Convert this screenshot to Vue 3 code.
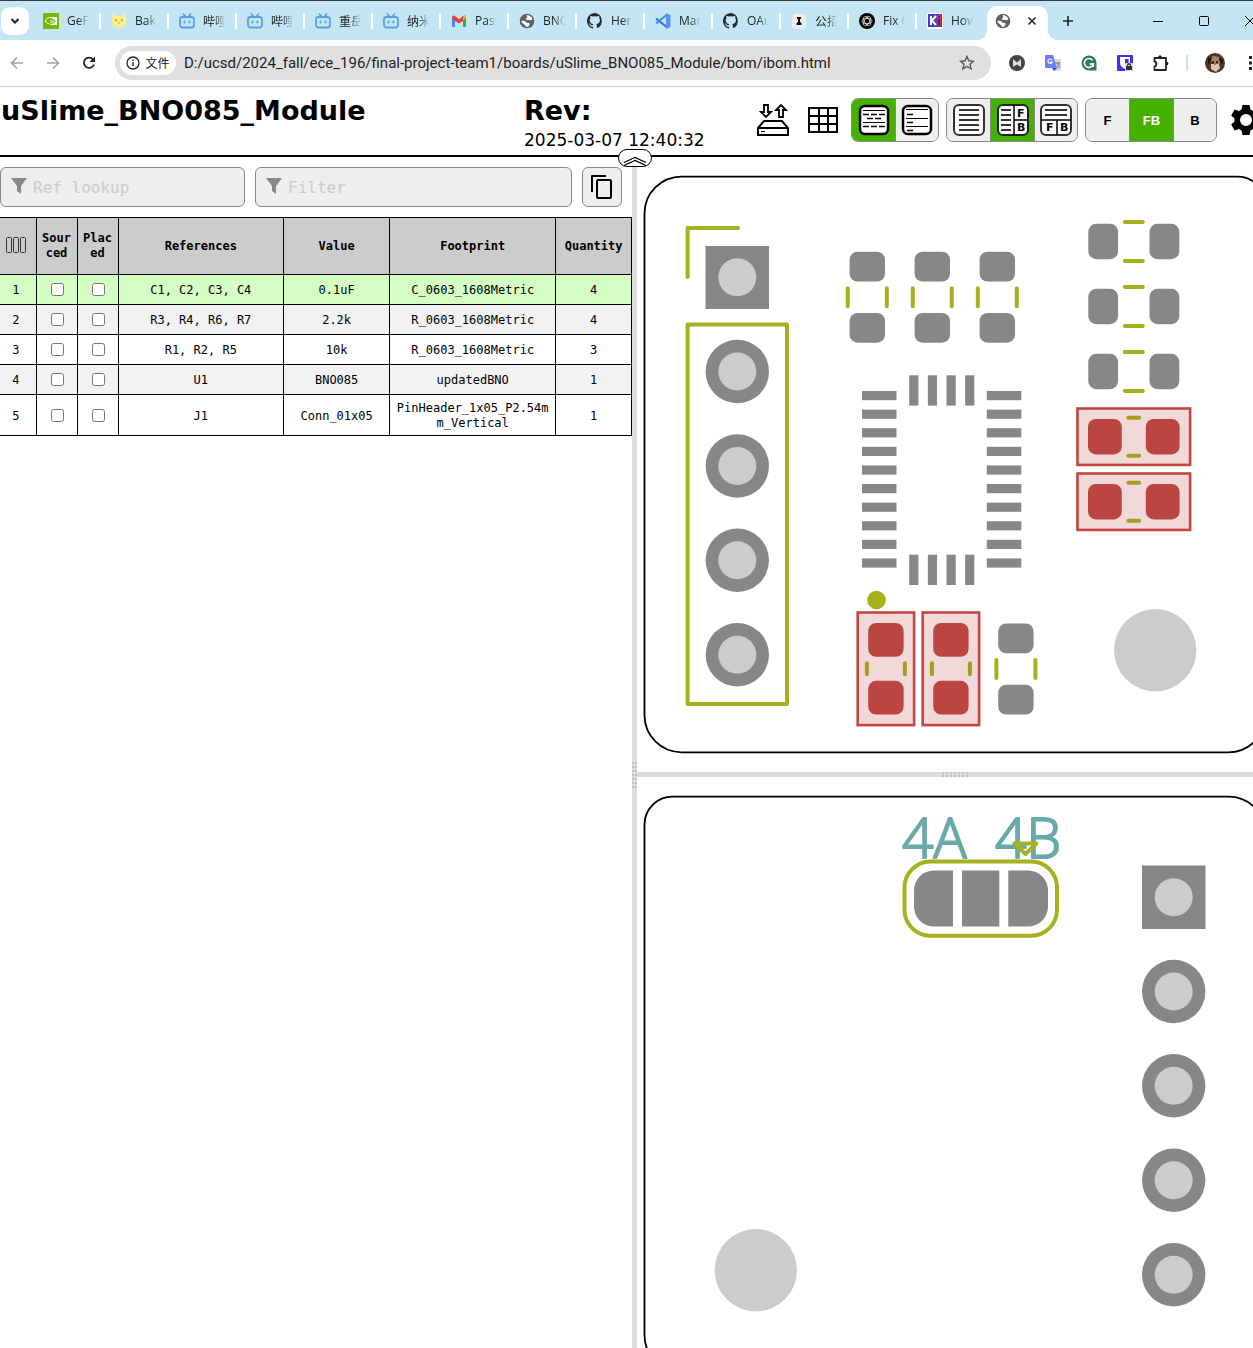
<script setup>
import { ref } from 'vue'

const tabs = [
  { icon: 'nvidia', title: 'GeF' },
  { icon: 'cat', title: 'Bak' },
  { icon: 'bili', title: '哔哩' },
  { icon: 'bili', title: '哔哩' },
  { icon: 'bili', title: '重岳' },
  { icon: 'bili', title: '纳米' },
  { icon: 'gmail', title: 'Pass' },
  { icon: 'globe', title: 'BNO' },
  { icon: 'github', title: 'Her' },
  { icon: 'vscode', title: 'Mar' },
  { icon: 'github', title: 'OAu' },
  { icon: 'arknights', title: '公招' },
  { icon: 'gpt', title: 'Fix C' },
  { icon: 'kicad', title: 'How' }
]
const url = ref('D:/ucsd/2024_fall/ece_196/final-project-team1/boards/uSlime_BNO085_Module/bom/ibom.html')
const refLookup = ref('')
const filter = ref('')
const extensions = ['mail', 'translate', 'grammarly', 'bitwarden', 'puzzle']

const rows = ref([
  { refs: 'C1, C2, C3, C4', value: '0.1uF', footprint: 'C_0603_1608Metric', qty: 4, sourced: false, placed: false },
  { refs: 'R3, R4, R6, R7', value: '2.2k', footprint: 'R_0603_1608Metric', qty: 4, sourced: false, placed: false },
  { refs: 'R1, R2, R5', value: '10k', footprint: 'R_0603_1608Metric', qty: 3, sourced: false, placed: false },
  { refs: 'U1', value: 'BNO085', footprint: 'updatedBNO', qty: 1, sourced: false, placed: false },
  { refs: 'J1', value: 'Conn_01x05', footprint: 'PinHeader_1x05_P2.54mm_Vertical', qty: 1, sourced: false, placed: false }
])
const selected = ref(0)

const resistors = [
  { x: 867.3, y: 297.2, r: 90 }, { x: 932.3, y: 297.2, r: 90 }, { x: 997.3, y: 297.2, r: 90 },
  { x: 1133.8, y: 241.5, r: 0 }, { x: 1133.8, y: 306.5, r: 0 }, { x: 1133.8, y: 371.5, r: 0 },
  { x: 1015.9, y: 669, r: 90 }
]
const capacitors = [
  { x: 1133.8, y: 436.7, r: 0 }, { x: 1133.8, y: 501.7, r: 0 },
  { x: 885.9, y: 668.8, r: 90 }, { x: 950.9, y: 668.8, r: 90 }
]
const sidePads = Array.from({ length: 10 }, (_, i) => 391 + i * 18.6)
const endPads = Array.from({ length: 4 }, (_, i) => 909.2 + i * 18.65)
const frontPins = [371.5, 466, 560.3, 654.7]
const backPins = [991.5, 1085.8, 1180.3, 1274.7]
</script>

<template>
  <svg class="defs" aria-hidden="true">
    <symbol id="nvidia" viewBox="0 0 16 16"><path fill="#76b900" d="M0 0h16v16H0z" /><path fill="#fff" d="M7 4h7v8H7z" /><path fill="none" stroke="#fff" d="M2 8c3-5 7-4 9 0-2 3-6 4-9 0z" /><path fill="none" stroke="#76b900" stroke-width="1.200" d="M6 5.400c3 0 4.500 1 6 2.600-2 2.500-4 3-6 3M5 8c1-2 3-2 4 0-1 1.500-2 1.500-4 0z" /></symbol>
    <symbol id="cat" viewBox="0 0 16 16"><path fill="#fbf08a" d="M1.500.5L5 3h6L14.500.5 15 9c0 4-3 6-7 6s-7-2-7-6z" /><path stroke="#c99a3e" stroke-width="1.500" d="M5 6v2.500M11 6v2.500" /><path stroke="#e79a78" d="M7 10h2" /></symbol>
    <symbol id="bili" viewBox="0 0 16 16"><g fill="none" stroke="#5b9fe3" stroke-width="1.800" stroke-linecap="round"><rect x="1" y="4" width="14" height="10.500" rx="2.500" /><path d="M4.500 1.200L6.500 3.500M11.500 1.200L9.500 3.500M5.500 8.500v1M10.500 8.500v1" /></g></symbol>
    <symbol id="gmail" viewBox="0 0 16 16"><path fill="#4285f4" d="M1 4.500h3V14H2a1 1 0 0 1-1-1z" /><path fill="#34a853" d="M12 4.500h3V13a1 1 0 0 1-1 1h-2z" /><path fill="#ea4335" d="M1 4.500C1 2 3 2 4 3l4 3.200L12 3c1-1 3-1 3 1.500L12 8 8 10.500 4 8z" /><path fill="#fbbc04" d="M12 4l2-1.500 1 2-3 3z" /></symbol>
    <symbol id="globe" viewBox="0 0 16 16"><circle cx="8" cy="8" r="7.300" fill="#5f6368" /><path fill="#fff" d="M2.500 8c2-.5 4 0 5 1.500 1 1 2 0 3 1 .7 1-1 1.800-1.200 3.200-2 .5-3-.2-3-1.500C5 11 2.500 10.500 2.500 8zM8 2c2 .2 4.500 1.500 5.400 4-1 1.600-2 1.700-3.400.8-1-.5-2 .5-3-.4-.6-.8.500-1.400 1.200-1.900S7 3 8 2z" /></symbol>
    <symbol id="github" viewBox="0 0 16 16"><path fill="#24292f" d="M8 0C3.580 0 0 3.580 0 8c0 3.540 2.290 6.530 5.470 7.590.4.070.55-.17.55-.38v-1.490c-2.010.37-2.690-.49-2.690-.94-.36-1-.9-1.500-1.100-1.600-.3-.2-.7-.6 0-.6.600 0 1.100.6 1.200.8.700 1.200 1.900.9 2.400.7.100-.5.300-.9.500-1.100-1.800-.2-3.600-.9-3.600-4 0-.9.300-1.600.8-2.100-.1-.2-.3-1 .1-2.100 0 0 .7-.2 2.200.8a7.600 7.600 0 0 1 4 0c1.500-1 2.200-.8 2.200-.8.400 1.100.2 1.900.1 2.100.5.600.8 1.300.8 2.100 0 3.100-1.900 3.700-3.700 4 .3.200.6.700.6 1.500v2.200c0 .2.100.5.500.4A8 8 0 0 0 8 0z" /></symbol>
    <symbol id="vscode" viewBox="0 0 16 16"><path fill="none" stroke="#3b6fd6" stroke-width="2.200" d="M1 5.500L11.500 14" /><path fill="none" stroke="#4d8af0" stroke-width="2.200" d="M1 10.500L11.500 2" /><path fill="#5b8ff5" d="M11 0l4.500 2v12L11 16z" /></symbol>
    <symbol id="arknights" viewBox="0 0 16 16"><path fill="#eee" d="M3 1h10l2 4v9l-2 2H3l-2-2V5z" /><path fill="#111" d="M6 4h4v2H9v3l1.500 1v2h-5v-2L7 9V6H6z" /></symbol>
    <symbol id="gpt" viewBox="0 0 16 16"><circle cx="8" cy="8" r="8" /><g fill="none" stroke="#fff" stroke-width=".7"><ellipse cx="8" cy="8" rx="5" ry="2.600" /><ellipse cx="8" cy="8" rx="5" ry="2.600" transform="rotate(60 8 8)" /><ellipse cx="8" cy="8" rx="5" ry="2.600" transform="rotate(120 8 8)" /></g></symbol>
    <symbol id="kicad" viewBox="0 0 16 16"><path fill="#fff" d="M0 0h16v16H0z" /><path fill="#4a3cc0" d="M1 1h14v13H1z" /><path stroke="#fff" stroke-width="2" fill="none" d="M4 3v9M9 3L5 7.500 9 12" /><path fill="#e22" d="M10 2h4v11h-4z" /><path stroke="#402a90" stroke-width="2" d="M12 3v1.500M12 6v6" /></symbol>
    <symbol id="mail" viewBox="0 0 16 16"><circle cx="8" cy="8" r="8" fill="#444" /><path fill="#ddd" d="M4 4l4 3.500L12 4v8L8 9.500 4 12z" /></symbol>
    <symbol id="translate" viewBox="0 0 16 16"><path fill="#d5d8de" d="M7 4h9v12H9z" /><path fill="#6b7ef4" d="M0 0h8l4 13H1a1 1 0 0 1-1-1z" /><path fill="#3a4bd8" d="M7 13h5l-3 3z" /><path fill="none" stroke="#fff" stroke-width="1.200" d="M7 5a2.200 2.200 0 1 0 .2 2H5" /><path fill="none" stroke="#688" d="M10 8h5M12.500 7v1c0 2 1 4 2.500 5M14.500 8c0 2-1 4-3 5" /></symbol>
    <symbol id="grammarly" viewBox="0 0 16 16"><path fill="#2c7a5f" d="M8 .5A7.500 7.500 0 0 1 15.500 8v7.500H8A7.500 7.500 0 0 1 8 .5z" /><path fill="none" stroke="#fff" stroke-width="1.500" d="M11.500 5.200A4.500 4.500 0 1 0 12.300 9H8.500M12.300 8v4" /></symbol>
    <symbol id="bitwarden" viewBox="0 0 16 16"><rect width="16" height="16" rx="1" fill="#4030e8" /><path fill="#fff" d="M3 2h10v6c0 3-3 5-5 6-2-1-5-3-5-6z" /><path fill="#4030e8" d="M8 4h3.500v4c0 2-2 3-3.500 4z" /><rect x="8" y="8" width="8" height="8" rx="1" fill="#ddd" /><path fill="#333" d="M9 11h6v4H9zM10 11v-1a2 2 0 0 1 4 0v1h-1v-1h-2v1z" /></symbol>
    <symbol id="puzzle" viewBox="0 0 16 16"><path fill="none" stroke="#222" stroke-width="1.800" stroke-linejoin="round" d="M1.500 3H13v12H1.500v-3.500c2.500-.5 2.500-4.500 0-5z" /><path fill="#222" d="M5 3c0-3.600 4-3.600 4 0zM13 6.500c3.200 0 3.200 4 0 4z" /></symbol>
    <symbol id="funnel" viewBox="0 0 16 16"><path fill="#888" d="M0 0h16L10 8v8l-4-3V8z" /></symbol>
  </svg>

  <div class="app">
    <header class="browser">
      <nav class="tabstrip" aria-label="Tabs">
        <button class="tabsearch" aria-label="Search tabs">
          <svg width="10" height="10" viewBox="0 0 10 10"><path d="M1.500 3L5 6.500 8.500 3" fill="none" stroke="#222" stroke-width="2" /></svg>
        </button>
        <button v-for="(t, i) in tabs" :key="i" class="tab">
          <svg width="16" height="16"><use :href="'#' + t.icon" /></svg>
          <span class="tabtitle">{{ t.title }}</span>
        </button>
        <div class="tab-active">
          <svg width="16" height="16"><use href="#globe" /></svg>
          <button class="plain" aria-label="Close tab">
            <svg width="10" height="10" viewBox="0 0 10 10"><path d="M1.500 1.500l7 7M8.500 1.500l-7 7" stroke="#222" stroke-width="1.600" /></svg>
          </button>
        </div>
        <button class="plain newtab" aria-label="New tab">
          <svg width="12" height="12" viewBox="0 0 12 12"><path d="M6 1v10M1 6h10" stroke="#222" stroke-width="1.600" /></svg>
        </button>
        <div class="winbtns">
          <button class="plain" aria-label="Minimize"><svg width="12" height="12"><path d="M1 6.500h10" stroke="#000" /></svg></button>
          <button class="plain" aria-label="Maximize"><svg width="12" height="12"><rect x="1.500" y="1.500" width="9" height="9" rx="1" fill="none" stroke="#000" /></svg></button>
          <button class="plain" aria-label="Close"><svg width="12" height="12"><path d="M1 1l10 10M11 1L1 11" stroke="#000" /></svg></button>
        </div>
      </nav>
      <div class="toolbar">
        <div class="navbtns">
          <button class="plain" aria-label="Back"><svg width="14" height="14" viewBox="0 0 14 14"><path d="M13 7H2M7 1.500L1.500 7 7 12.500" fill="none" stroke="#a3a3a3" stroke-width="1.600" /></svg></button>
          <button class="plain" aria-label="Forward"><svg width="14" height="14" viewBox="0 0 14 14"><path d="M1 7h11M7 1.500L12.500 7 7 12.500" fill="none" stroke="#a3a3a3" stroke-width="1.600" /></svg></button>
          <button class="plain" aria-label="Reload"><svg width="14" height="14" viewBox="0 0 14 14"><path d="M12 8.500A5.200 5.200 0 1 1 11 3.300l1 1.200" fill="none" stroke="#222" stroke-width="1.800" /><path d="M13 .5v5.500H7.500z" fill="#222" /></svg></button>
        </div>
        <div class="omnibox">
          <button class="chip">
            <svg width="14" height="14" viewBox="0 0 14 14"><circle cx="7" cy="7" r="6" fill="none" stroke="#222" stroke-width="1.300" /><path d="M7 6v4M7 3.500v1.400" stroke="#222" stroke-width="1.400" /></svg>
            <span>文件</span>
          </button>
          <input v-model="url" class="url" aria-label="Address" />
          <button class="plain" aria-label="Bookmark"><svg width="16" height="16" viewBox="0 0 16 16"><path d="M8 1.500l1.900 4.300 4.600.4-3.500 3.100 1.100 4.600L8 11.500l-4.100 2.400L5 9.300 1.500 6.200l4.600-.4z" fill="none" stroke="#555" stroke-width="1.400" /></svg></button>
        </div>
        <div class="extensions">
          <button v-for="e in extensions" :key="e" class="plain" :aria-label="e"><svg width="16" height="16"><use :href="'#' + e" /></svg></button>
        </div>
        <span class="toolsep"></span>
        <button class="plain avatar" aria-label="Profile">
          <svg width="20" height="20" viewBox="0 0 20 20"><circle cx="10" cy="10" r="10" fill="#4d3527" /><path d="M4 6l4-3 7 1 2 5-3 2-7-1z" fill="#a98264" /><path d="M6 11h8l1 4-4 4-5-3z" fill="#d9c5ad" /><path d="M3 5l4-1-1 4-3 4zM14 4l4 3-1 5-3-5z" fill="#1e1511" /><circle cx="8" cy="9" r="1" /><circle cx="12" cy="9" r="1" /><circle cx="10" cy="11" r="1" fill="#b55" /></svg>
        </button>
        <button class="plain" aria-label="Menu"><svg width="4" height="16" viewBox="0 0 4 16"><path d="M0 1h3v3H0zM0 6.500h3v3H0zM0 12h3v3H0z" fill="#222" /></svg></button>
      </div>
    </header>

    <section class="infobar">
      <h1>uSlime_BNO085_Module</h1>
      <div class="rev">
        <h1>Rev:</h1>
        <time>2025-03-07 12:40:32</time>
      </div>
      <div class="tools">
        <button class="plain" aria-label="Save or load state">
          <svg width="32" height="34" viewBox="0 0 32 34" fill="none" stroke="#000" stroke-width="2"><path d="M1 25L7 18h18l6 7v7H1zM1 25h30" /><path d="M4 28.500h4" stroke-width="1" /><path d="M7 2h4v7h3l-5 5-5-5h3z" stroke-width="1.800" /><path d="M22 14h4V7h3l-5-5-5 5h3z" stroke-width="1.800" /></svg>
        </button>
        <button class="plain gridbtn" aria-label="Table statistics">
          <svg width="30" height="26" viewBox="0 0 30 26" fill="none" stroke="#000" stroke-width="2"><path d="M1 1h28v24H1zM1 9h28M1 17h28M11 1v24M20 1v24" /></svg>
        </button>
        <div class="group">
          <button class="on" aria-label="Grouped">
            <svg width="32" height="32" viewBox="0 0 32 32"><rect x="2" y="2" width="28" height="28" rx="5" fill="#fff" stroke="#000" stroke-width="2.500" /><path d="M5 10.500h22M9 14.500h14M5 22.500h22" stroke="#000" stroke-width="1.600" stroke-dasharray="6 2" /><path d="M5 6.500h22M5 18.500h22" stroke="#000" /></svg>
          </button>
          <button aria-label="Ungrouped">
            <svg width="32" height="32" viewBox="0 0 32 32"><rect x="2" y="2" width="28" height="28" rx="5" fill="#fff" stroke="#000" stroke-width="2.500" /><path d="M6 10.500h6M6 18.500h6M6 26.500h6" stroke="#000" stroke-width="1.600" /><path d="M5 5.500h22M5 14.500h22M5 22.500h22" stroke="#000" /></svg>
          </button>
        </div>
        <div class="group">
          <button aria-label="BOM only">
            <svg width="32" height="32" viewBox="0 0 32 32"><rect x="1" y="1" width="30" height="30" rx="5" fill="#fff" stroke="#333" stroke-width="2" /><path d="M6 6h20M6 11h20M6 16h20M6 21h20M6 26h20" stroke="#333" stroke-width="2" /></svg>
          </button>
          <button class="on" aria-label="BOM left, drawings right">
            <svg width="32" height="32" viewBox="0 0 32 32"><rect x="1" y="1" width="30" height="30" rx="5" fill="#fff" stroke="#222" stroke-width="2" /><path d="M4 6h10M4 11h10M4 16h10M4 21h10M4 26h10" stroke="#333" stroke-width="2" /><path d="M17 1v30M17 16h14" stroke="#000" stroke-width="1.500" /><text x="20" y="13">F</text><text x="20" y="27">B</text></svg>
          </button>
          <button aria-label="BOM top, drawings bottom">
            <svg width="32" height="32" viewBox="0 0 32 32"><rect x="1" y="1" width="30" height="30" rx="5" fill="#fff" stroke="#333" stroke-width="2" /><path d="M5 6h22M5 11h22" stroke="#333" stroke-width="2" /><path d="M17 16v15M1 16h30" stroke="#000" stroke-width="1.500" /><text x="6" y="27">F</text><text x="20" y="27">B</text></svg>
          </button>
        </div>
        <div class="group">
          <button>F</button>
          <button class="on">FB</button>
          <button>B</button>
        </div>
        <button class="plain gear" aria-label="Settings">
          <svg width="32" height="32" viewBox="0 0 32 32"><path fill-rule="evenodd" d="M12.500 1h7l1 4.500 2.500 1.500 4.300-1.500 3.500 6-3.300 3v3l3.300 3-3.500 6-4.300-1.500-2.500 1.500-1 4.500h-7l-1-4.500L9 25l-4.300 1.500-3.500-6 3.300-3v-3l-3.300-3 3.500-6L9 7l2.500-1.500zM16 10a6 6 0 1 0 0 12 6 6 0 0 0 0-12z" /></svg>
        </button>
      </div>
    </section>

    <main class="split">
      <section class="bom">
        <div class="filters">
          <label class="field lookup">
            <svg width="16" height="16"><use href="#funnel" /></svg>
            <input v-model="refLookup" placeholder="Ref lookup" aria-label="Ref lookup" />
          </label>
          <label class="field">
            <svg width="16" height="16"><use href="#funnel" /></svg>
            <input v-model="filter" placeholder="Filter" aria-label="Filter" />
          </label>
          <button class="copy" aria-label="Copy table">
            <svg width="22" height="26" viewBox="0 0 22 26" fill="none" stroke="#000" stroke-width="2" stroke-linejoin="round"><path d="M1 18V2h14" /><rect x="6" y="6" width="14" height="18" rx="1" /></svg>
          </button>
        </div>
        <table>
          <colgroup>
            <col class="c-num" /><col class="c-check" /><col class="c-check" /><col />
            <col class="c-value" /><col class="c-footprint" /><col class="c-qty" />
          </colgroup>
          <thead>
            <tr>
              <th aria-label="Columns"><svg class="cols" width="22" height="18" fill="none" stroke="#333"><rect x="1.500" y=".5" width="5" height="15" rx="1" /><rect x="8.500" y=".5" width="5" height="15" rx="1" /><rect x="15.500" y=".5" width="5" height="15" rx="1" /></svg></th>
              <th>Sourced</th><th>Placed</th><th>References</th><th>Value</th><th>Footprint</th><th>Quantity</th>
            </tr>
          </thead>
          <tbody>
            <tr v-for="(r, i) in rows" :key="r.refs" :class="{ selected: i === selected }" @click="selected = i">
              <td>{{ i + 1 }}</td>
              <td><input v-model="r.sourced" type="checkbox" :aria-label="'Sourced ' + r.refs" /></td>
              <td><input v-model="r.placed" type="checkbox" :aria-label="'Placed ' + r.refs" /></td>
              <td>{{ r.refs }}</td>
              <td>{{ r.value }}</td>
              <td>{{ r.footprint }}</td>
              <td>{{ r.qty }}</td>
            </tr>
          </tbody>
        </table>
      </section>

      <div class="gutter-v">
        <button class="collapse" aria-label="Collapse header">
          <svg width="24" height="10" viewBox="0 0 24 10" fill="none" stroke="#000" stroke-width="1.300"><path d="M1 6.500L12 1.500l11 5M1 9.500l11-5 11 5" /></svg>
        </button>
        <span class="grip-v"></span>
      </div>

      <section class="boards">
        <svg class="board" viewBox="637 157 616 615" role="img" aria-label="Front side">
          <path class="edge" d="M681.500 176.600H1237.500a28 28 0 0 1 28 28V715.300a37 37 0 0 1-37 37H681.500a37 37 0 0 1-37-37V213.600a37 37 0 0 1 37-37z" />
          <g class="silk">
            <path d="M738 228H687.600V277M687.600 324.500H787V704H687.600z" />
          </g>
          <path class="pad" d="M705.500 246H769V309H705.500z" />
          <circle class="hole" cx="737.300" cy="277.300" r="19" />
          <g v-for="y in frontPins" :key="y">
            <circle class="pad" cx="737.300" :cy="y" r="31.700" />
            <circle class="hole" cx="737.300" :cy="y" r="19" />
          </g>
          <g v-for="(c, i) in resistors" :key="'r' + i" :transform="`translate(${c.x} ${c.y}) rotate(${c.r})`">
            <rect class="pad" x="-45.500" y="-17.700" width="29.800" height="35.400" rx="8" />
            <rect class="pad" x="15.700" y="-17.700" width="29.800" height="35.400" rx="8" />
            <path class="silk" d="M-9-19.500H9M-9 19.500H9" />
          </g>
          <g v-for="(c, i) in capacitors" :key="'c' + i" :transform="`translate(${c.x} ${c.y}) rotate(${c.r})`">
            <rect class="box" x="-56.300" y="-28.200" width="112.600" height="56.400" />
            <rect class="pad hot" x="-45.800" y="-17.700" width="33.800" height="35.400" rx="8" />
            <rect class="pad hot" x="12" y="-17.700" width="33.800" height="35.400" rx="8" />
            <path class="silk hot" d="M-5.500-19H5.500M-5.500 19H5.500" />
          </g>
          <g v-for="y in sidePads" :key="'s' + y">
            <rect class="pad" x="862" :y="y" width="34.500" height="9.200" />
            <rect class="pad" x="986.800" :y="y" width="34.500" height="9.200" />
          </g>
          <g v-for="x in endPads" :key="'e' + x">
            <rect class="pad" :x="x" y="375.300" width="9.200" height="30.300" />
            <rect class="pad" :x="x" y="554.700" width="9.200" height="30.300" />
          </g>
          <circle class="dot" cx="876.500" cy="600" r="9.300" />
          <circle class="hole" cx="1155.200" cy="650.200" r="41.200" />
        </svg>

        <div class="gutter-h"><span class="grip-h"></span></div>

        <svg class="board" viewBox="637 777 616 571" role="img" aria-label="Back side">
          <path class="edge" d="M672.500 796.600H1228.500a37 37 0 0 1 37 37V1335a37 37 0 0 1-37 37H681.500a37 37 0 0 1-37-37V824.600a28 28 0 0 1 28-28z" />
          <text class="label" x="902" y="858">4A</text>
          <text class="label" x="995" y="858">4B</text>
          <g class="silk">
            <rect x="904.500" y="861.500" width="152.500" height="74.300" rx="26" />
            <path d="M1014.500 843.500H1036.500L1025.500 854z" />
          </g>
          <path class="pad" d="M953 870.500V926.500H934a20 20 0 0 1-20-20V890.500a20 20 0 0 1 20-20zM962 870.500H999.300V926.500H962zM1008.300 870.500H1028a20 20 0 0 1 20 20V906.500a20 20 0 0 1-20 20H1008.300z" />
          <path class="pad" d="M1142 865.500H1205.500V929H1142z" />
          <circle class="hole" cx="1173.700" cy="897.200" r="19" />
          <g v-for="y in backPins" :key="y">
            <circle class="pad" cx="1173.700" :cy="y" r="31.700" />
            <circle class="hole" cx="1173.700" :cy="y" r="19" />
          </g>
          <circle class="hole" cx="755.800" cy="1270.200" r="41.200" />
        </svg>
      </section>
    </main>
  </div>
</template>

<style>
body { background: #fff; }
</style>

<style scoped>
* { box-sizing: border-box; }
.defs { position: absolute; width: 0; height: 0; }
svg { display: block; flex: none; }
button, input { font: inherit; color: inherit; }
button { padding: 0; border: 0; cursor: pointer; }
.app { min-height: 100vh; display: flex; flex-direction: column; overflow: hidden; font-family: "DejaVu Sans", Verdana, sans-serif; color: #000; }
.plain { background: none; display: flex; align-items: center; justify-content: center; flex: none; }

.browser { font-family: "Open Sans", "Noto Sans CJK SC", sans-serif; color: #222; }
.tabstrip { display: flex; align-items: center; height: 40px; padding: 0 0 0 1px; border-top: 1px solid #3b3840; background: #c4e6f4; overflow: hidden; }
.tabsearch { width: 28px; height: 28px; margin-right: 4px; flex: none; border-radius: 9px; background: #fff; display: flex; align-items: center; justify-content: center; }
.tab { position: relative; flex: none; width: 68px; height: 28px; display: flex; align-items: center; gap: 8px; padding: 0 12px 0 10px; background: none; font-size: 12px; }
.tab::after { content: ""; position: absolute; right: 0; top: 6px; width: 2px; height: 16px; background: #fff; }
.tab:nth-of-type(15)::after { display: none; }
.tabtitle { flex: 1; min-width: 0; overflow: hidden; white-space: nowrap; text-align: left; mask-image: linear-gradient(90deg, #000 50%, transparent); }
.tab-active { position: relative; flex: none; width: 61px; height: 34px; margin: 5px 0 0 2px; padding: 0 11px 5px 8px; border-radius: 10px 10px 0 0; background: #fff; display: flex; align-items: center; justify-content: space-between; }
.tab-active::before, .tab-active::after { content: ""; position: absolute; bottom: 0; width: 10px; height: 10px; }
.tab-active::before { right: 100%; background: radial-gradient(circle at 0 0, transparent 10px, #fff 10px); }
.tab-active::after { left: 100%; background: radial-gradient(circle at 100% 0, transparent 10px, #fff 10px); }
.newtab { width: 28px; height: 28px; margin-left: 6px; }
.winbtns { display: flex; margin: 0 -20px 0 auto; }
.winbtns button { width: 46px; height: 36px; }
.toolbar { display: flex; align-items: center; height: 47px; border-bottom: 1px solid #ccc; overflow: hidden; }
.navbtns { display: flex; gap: 22px; margin: 0 19px 0 10px; }
.omnibox { flex: 1; min-width: 0; height: 34px; display: flex; align-items: center; padding: 0 16px 0 5px; border-radius: 17px; background: #e0e0e0; }
.chip { height: 24px; width: 56px; flex: none; border-radius: 12px; background: #fff; display: flex; align-items: center; justify-content: center; gap: 5px; font-size: 12px; }
.url { flex: 1; min-width: 0; height: 24px; margin-left: 8px; padding: 0; border: 0; outline: 0; background: none; font-family: Roboto, "Open Sans", sans-serif; font-size: 15px; }
.extensions { display: flex; gap: 20px; margin-left: 18px; }
.toolsep { width: 2px; height: 16px; margin: 0 17px; background: #c4e6f4; }
.avatar { margin-right: 24px; }

.infobar { display: flex; height: 70px; border-bottom: 2px solid #000; padding-left: 1px; }
h1 { margin: 0; font-size: 27px; line-height: 32px; font-weight: bold; padding-top: 8px; }
.infobar > h1 { flex: 1; min-width: 0; }
.rev { width: 233px; flex: none; white-space: nowrap; }
.rev time { display: block; font-size: 17px; line-height: 26px; }
.tools { flex: none; width: 496px; display: flex; align-items: flex-start; gap: 7px; padding-top: 11px; overflow: hidden; }
.tools .plain { height: 44px; }
.tools .gridbtn { margin: 0 6px 0 12px; }
.tools .gear { margin-left: 6px; }
.group { flex: none; display: flex; height: 44px; border: 1px solid #888; border-radius: 7px; overflow: hidden; background: #eee; }
.group button { width: 43px; background: #eee; display: flex; align-items: center; justify-content: center; font: bold 13px "Liberation Sans", Arial, sans-serif; }
.group button + button { width: 44px; border-left: 1px solid #888; }
.group button:last-child { width: 43px; }
.group .on { background: #46b000; color: #fff; }
.group text { font: bold 11px "DejaVu Sans", sans-serif; fill: #000; }

.split { flex: 1; display: grid; grid-template-columns: minmax(0, 632fr) 5px minmax(0, 616fr); }
.bom { font-family: "DejaVu Sans Mono", Consolas, monospace; }
.filters { display: flex; gap: 10px; padding: 10px; padding-left: 0; }
.field { flex: 295; min-width: 0; height: 40px; display: flex; align-items: center; gap: 6px; padding: 0 10px; border: 1px solid #888; border-radius: 6px; background: #eee; }
.lookup { flex: 223; }
.field svg { margin-bottom: 2px; }
.field input { flex: 1; min-width: 0; padding: 0; border: 0; outline: 0; background: none; font-size: 16px; }
.field input::placeholder { color: #ccc; opacity: 1; }
.copy { width: 40px; height: 40px; flex: none; border: 1px solid #888; border-radius: 6px; background: #eee; display: flex; align-items: center; justify-content: center; }
table { width: 100%; table-layout: fixed; border-collapse: collapse; font-size: 12px; line-height: 15px; }
.c-num { width: 36px; }
.c-check { width: 41px; }
.c-value { width: 16.8%; }
.c-footprint { width: 26.3%; }
.c-qty { width: 12%; }
th, td { border: 1px solid #000; padding: 6px 4px 4px; text-align: center; overflow-wrap: anywhere; word-break: break-all; }
th { height: 57px; padding: 4px; background: #ccc; }
th:first-child, td:first-child { border-left: 0; padding-right: 8px; }
td { height: 30px; }
tbody tr:nth-child(even) { background: #f2f2f2; }
tbody tr.selected { background: #d4fec4; }
td:has(input) { padding: 5px 3px 5px 5px; }
td input { display: block; width: 13px; height: 13px; margin: 0 auto; }
.cols { margin: 0 auto; }

.gutter-v { position: relative; background: #ddd; }
.collapse { position: absolute; top: -8px; left: -14px; width: 34px; height: 18px; border: 1px solid #000; border-radius: 9px; background: #fff; display: flex; align-items: flex-end; justify-content: center; }
.grip-v { position: absolute; left: 0; top: 50%; width: 5px; height: 30px; background: repeating-linear-gradient(#ddd 0 2px, transparent 2px 4px), repeating-linear-gradient(90deg, #c0c0c0 0 2px, #ddd 2px 3px); margin-top: 7px; }
.boards { min-width: 0; }
.board { width: 100%; height: auto; }
.gutter-h { height: 5px; background: #ddd; display: flex; justify-content: center; }
.grip-h { width: 30px; height: 5px; margin-left: 20px; background: repeating-linear-gradient(90deg, #ddd 0 2px, transparent 2px 4px), repeating-linear-gradient(#c0c0c0 0 2px, #ddd 2px 3px); }

.edge { fill: none; stroke: #000; stroke-width: 1.800; }
.silk { fill: none; stroke: #a5b11d; stroke-width: 4px; stroke-linecap: round; stroke-linejoin: round; }
.silk.hot { stroke: #aa9c23; }
.pad { fill: #878787; }
.pad.hot { fill: #bb4541; }
.hole { fill: #ccc; }
.box { fill: #f2d9d9; stroke: #c24542; stroke-width: 2.600; }
.dot { fill: #a5b11d; }
.label { font: 300 55px "Open Sans", sans-serif; fill: #69a9ab; stroke: #69a9ab; stroke-width: 2px; stroke-linejoin: round; }
</style>
